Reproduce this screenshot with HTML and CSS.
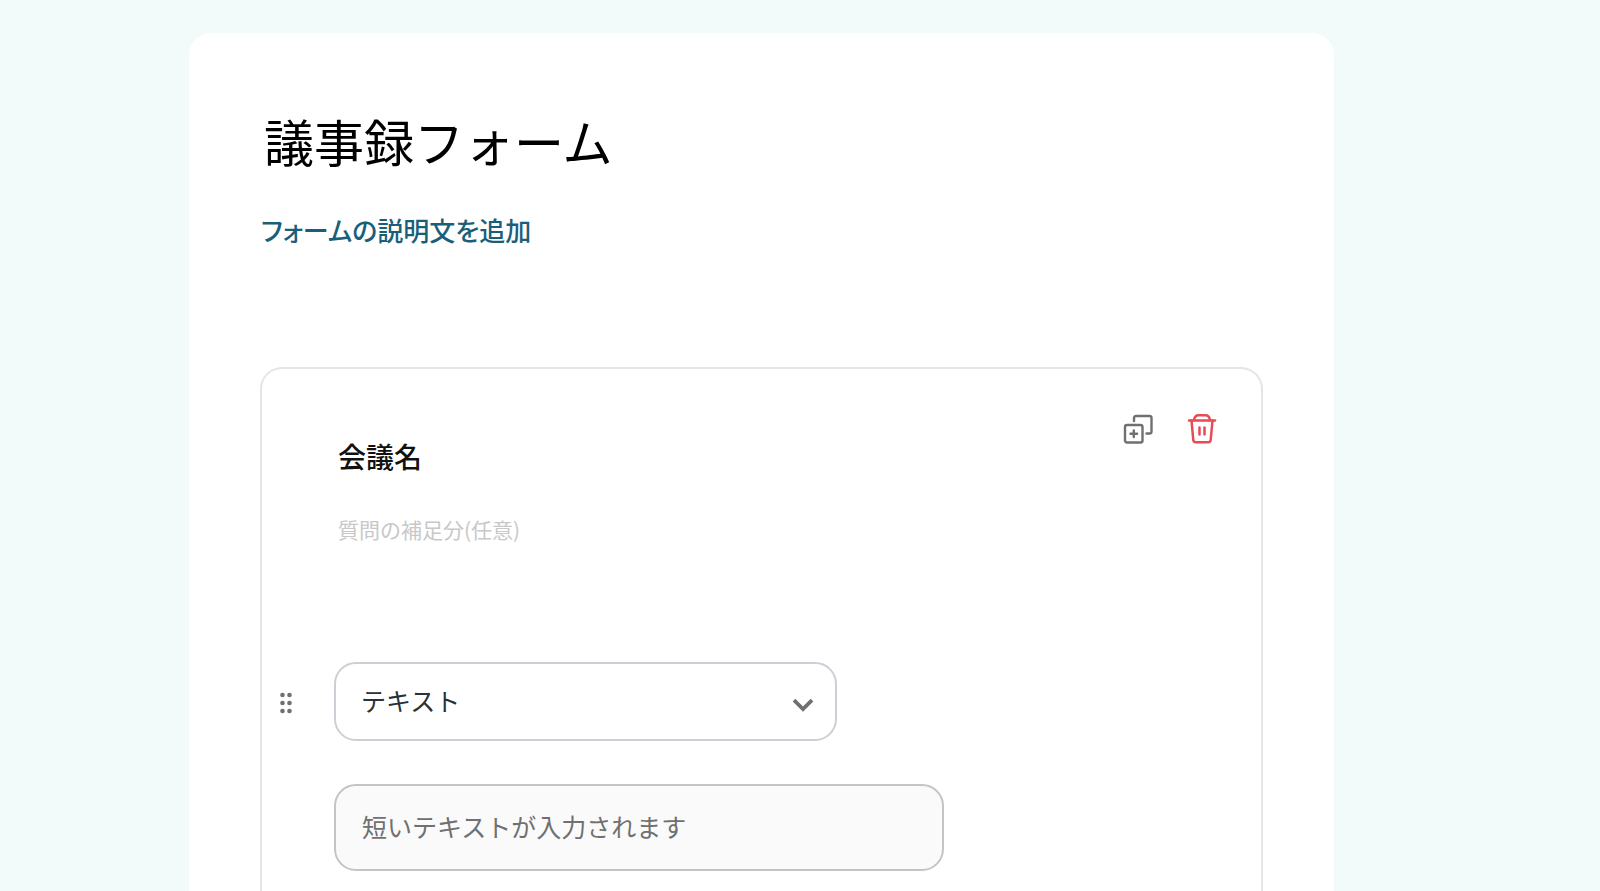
FILE: index.html
```
<!DOCTYPE html>
<html lang="ja">
<head>
  <meta charset="UTF-8" />
  <meta name="viewport" content="width=device-width, initial-scale=1" />
  <title>議事録フォーム</title>
  <link rel="stylesheet" href="styles.css">
</head>
<body>

<main class="page">
  <div class="form-card">
    <input type="text" class="form-title" aria-label="フォーム名" value="議事録フォーム" />
    <button type="button" class="add-description">フォームの説明文を追加</button>

    <section class="question">
      <button type="button" class="drag-handle" aria-label="並び替え">
        <svg width="12" height="22" viewBox="0 0 12 22" fill="#707070">
          <circle cx="2.5" cy="3" r="2.3" /><circle cx="9.5" cy="3" r="2.3" />
          <circle cx="2.5" cy="11" r="2.3" /><circle cx="9.5" cy="11" r="2.3" />
          <circle cx="2.5" cy="19" r="2.3" /><circle cx="9.5" cy="19" r="2.3" />
        </svg>
      </button>

      <div class="question-body">
        <div class="question-head">
          <div class="question-texts">
            <input type="text" class="question-name" aria-label="質問名" value="会議名" />
            <input type="text" class="question-note" aria-label="質問の補足分" placeholder="質問の補足分(任意)" />
          </div>
          <div class="actions">
            <button type="button" class="icon-button copy" aria-label="複製">
              <svg width="32" height="32" viewBox="0 0 32 32" fill="none" stroke="currentColor" stroke-width="2.4" stroke-linecap="round" stroke-linejoin="round">
                <rect x="3" y="12" width="17.500" height="17.500" rx="2" />
                <path d="M11.800 17.500v6.600M8.500 20.800h6.600" />
                <path d="M12 8V5a2 2 0 0 1 2-2h13.500a2 2 0 0 1 2 2v13.500a2 2 0 0 1-2 2H24.500" />
              </svg>
            </button>
            <button type="button" class="icon-button delete" aria-label="削除">
              <svg width="32" height="32" viewBox="0 0 32 32" fill="none" stroke="currentColor" stroke-width="2.5" stroke-linecap="round" stroke-linejoin="round">
                <path d="M3 7.500h26" />
                <path d="M8 7C8.500 4 10 2.300 12.500 2.300h7c2.500 0 4 1.700 4.500 4.700" />
                <path d="M5.500 7.500l1.800 19.500a2.500 2.500 0 0 0 2.500 2.300h12.400a2.500 2.500 0 0 0 2.500-2.300L26.500 7.500" />
                <path d="M13.500 14.500v7M18.500 14.500v7" />
              </svg>
            </button>
          </div>
        </div>

        <div class="select-wrap">
          <select class="type-select" aria-label="回答の種類">
            <option selected>テキスト</option>
          </select>
          <svg class="chevron" width="22" height="14" viewBox="0 0 22 14" fill="none" stroke="#707070" stroke-width="3.8">
            <path d="M2 2.200l9 8.800 9-8.800" />
          </svg>
        </div>

        <input type="text" class="answer-preview" aria-label="回答" placeholder="短いテキストが入力されます" readonly />
      </div>
    </section>
  </div>
</main>

</body>
</html>
```
FILE: styles.css
```
* {
  box-sizing: border-box;
}

body {
  margin: 0;
  background-color: #f3fafa;
  font-family: "Noto Sans CJK JP", sans-serif;
  color: #111;
}

input,
select,
button {
  margin: 0;
  padding: 0;
  border: none;
  background: none;
  font-family: inherit;
  color: inherit;
}

button {
  cursor: pointer;
}

svg {
  display: block;
}

.page {
  padding: 33px 266px 0 189px;
}

.form-card {
  display: flex;
  flex-direction: column;
  align-items: flex-start;
  padding: 69px 71px 0;
  background-color: #fff;
  border-radius: 22px 22px 0 0;
}

.form-title {
  width: 100%;
  height: 76px;
  padding: 0 4px;
  font-size: 50px;
  color: #000;
}

.add-description {
  margin-top: 33px;
  padding: 0 1px;
  font-size: 26px;
  line-height: 38px;
  font-weight: 500;
  font-feature-settings: "palt";
  color: #1a5f7a;
}

.question {
  display: flex;
  width: 100%;
  margin-top: 118px;
  padding: 40px 43px 20px 16px;
  border: 2px solid #e5e5e5;
  border-bottom: none;
  border-radius: 22px 22px 0 0;
}

.drag-handle {
  flex: none;
  width: 16px;
  margin-top: 283px;
  align-self: flex-start;
  cursor: grab;
}

.drag-handle svg {
  margin: 0 auto;
}

.question-body {
  flex: 1;
  padding-left: 40px;
}

.question-head {
  display: flex;
  justify-content: space-between;
  height: 253px;
}

.question-texts {
  flex: 1;
  padding: 26px 4px 0;
}

.question-name {
  display: block;
  width: 100%;
  height: 42px;
  font-size: 28px;
  font-weight: 500;
}

.question-note {
  display: block;
  width: 100%;
  height: 32px;
  margin-top: 36px;
  font-size: 21px;
}

.question-note::placeholder {
  color: #c8c8c8;
}

.actions {
  display: flex;
  align-items: flex-start;
  gap: 32px;
  padding-top: 4px;
}

.icon-button {
  width: 32px;
  height: 32px;
}

.copy {
  color: #707070;
}

.delete {
  color: #e94b54;
}

.select-wrap {
  position: relative;
  width: 503px;
  max-width: 100%;
}

.type-select {
  display: block;
  width: 100%;
  height: 79px;
  padding: 0 64px 4px 25px;
  border: 2px solid #cbd0d6;
  border-radius: 22px;
  background-color: #fff;
  font-size: 25px;
  color: #28323a;
  appearance: none;
}

.chevron {
  position: absolute;
  top: 36px;
  right: 23px;
  pointer-events: none;
}

.answer-preview {
  display: block;
  width: 610px;
  max-width: 100%;
  height: 87px;
  margin-top: 43px;
  padding: 0 26px 4px;
  border: 2px solid #c4c4c4;
  border-radius: 22px;
  background-color: #fafafa;
  font-size: 25px;
}

.answer-preview::placeholder {
  color: #707070;
}
```
